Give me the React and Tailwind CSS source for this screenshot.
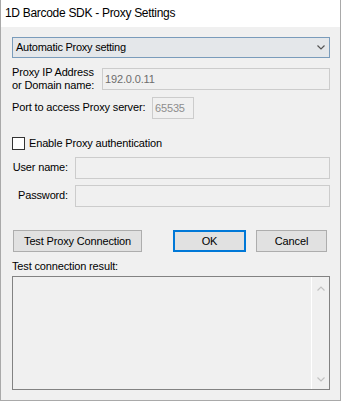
import React from "react";

const Chevron = ({ up, color, className }) => (
  <svg width="8" height="5" viewBox="0 0 8 5" className={className}>
    <path
      d={up ? "M0.5 4.5 L4 1 L7.5 4.5" : "M0.5 0.5 L4 4 L7.5 0.5"}
      fill="none"
      stroke={color}
      strokeWidth="1.2"
    />
  </svg>
);

const Field = ({ className = "", value, muted }) => (
  <div
    className={`h-[22px] border border-[#cccccc] bg-[#f0f0f0] flex items-center px-[2px] ${className}`}
  >
    {value && (
      <span className={muted ? "text-[#8d8d8d]" : "text-[#6d6d6d]"}>{value}</span>
    )}
  </div>
);

const App = () => {
  return (
    <div
      className="w-[341px] h-[401px] flex flex-col border-x border-b border-[#a9a9a9] text-[11px] tracking-[-0.15px] text-black leading-[13px]"
      style={{ fontFamily: '"Liberation Sans", Arial, sans-serif' }}
    >
      {/* title bar */}
      <div className="h-[27px] bg-white flex items-center pl-[4px] text-[12px] tracking-[-0.3px]">
        1D Barcode SDK - Proxy Settings
      </div>

      <div className="flex-1 bg-[#f0f0f0] pl-[11px] pr-[10px] pt-[10px] flex flex-col">
        {/* proxy mode */}
        <div className="h-[21px] w-[318px] border border-[#7a9cbb] bg-[#e4e7ea] flex items-center pl-[3px] pr-[4px]">
          <span className="flex-1 tracking-[-0.25px]">Automatic Proxy setting</span>
          <Chevron color="#555555" />
        </div>

        {/* ip */}
        <div className="flex items-start mt-[7px]">
          <div className="w-[90px] pt-[1px]">
            Proxy IP Address
            <br />
            or Domain name:
          </div>
          <Field className="w-[228px] mt-[3px]" value="192.0.0.11" />
        </div>

        {/* port */}
        <div className="flex items-start mt-[5px]">
          <div className="w-[140px] mt-[4px]">Port to access Proxy server:</div>
          <Field className="w-[42px]" value="65535" muted />
        </div>

        {/* auth */}
        <div className="flex items-center mt-[18px] h-[13px]">
          <div className="w-[13px] h-[13px] border border-[#333333] bg-white" />
          <span className="ml-[4px]">Enable Proxy authentication</span>
        </div>

        <div className="flex items-center mt-[7px]">
          <div className="w-[63px] text-right pr-[7px] pb-[1px]">User name:</div>
          <Field className="w-[255px]" />
        </div>
        <div className="flex items-center mt-[6px]">
          <div className="w-[63px] text-right pr-[7px] pb-[1px]">Password:</div>
          <Field className="w-[255px]" />
        </div>

        {/* buttons */}
        <div className="flex items-center mt-[23px]">
          <button className="ml-[1px] w-[129px] h-[22px] border border-[#adadad] bg-[#e1e1e1]">
            Test Proxy Connection
          </button>
          <button className="ml-[31px] w-[73px] h-[22px] border-2 border-[#0078d7] bg-[#e1e1e1]">
            OK
          </button>
          <button className="ml-[10px] w-[71px] h-[22px] border border-[#adadad] bg-[#e1e1e1]">
            Cancel
          </button>
        </div>

        <div className="mt-[8px]">Test connection result:</div>

        {/* result box */}
        <div className="mt-[3px] w-[318px] h-[114px] border border-[#828282] bg-[#f0f0f0] flex">
          <div className="flex-1" />
          <div className="w-[18px] border-l border-white flex flex-col items-center justify-between pt-[9px] pb-[7px]">
            <Chevron up color="#c2c2c2" />
            <Chevron color="#c2c2c2" />
          </div>
        </div>
      </div>
    </div>
  );
};

export default App;
